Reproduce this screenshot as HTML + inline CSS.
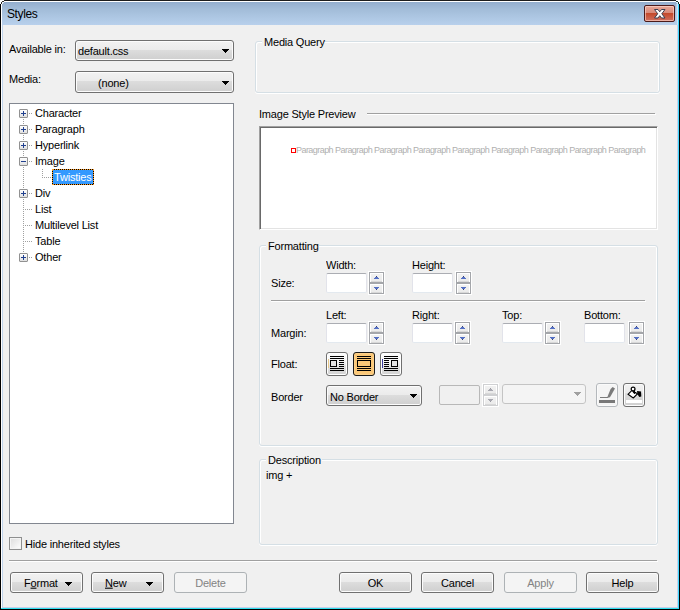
<!DOCTYPE html><html><head><meta charset="utf-8"><style>
*{box-sizing:border-box;margin:0;padding:0}
html,body{width:680px;height:610px;overflow:hidden;background:#f0f0f0}
body{position:relative;font-family:"Liberation Sans",sans-serif;font-size:11px;color:#000}
.a{position:absolute}
.t{position:absolute;white-space:nowrap;font-size:11px;letter-spacing:-0.2px;line-height:13px;transform:scaleY(1.06);transform-origin:0 0}
.btn{position:absolute;border:1px solid #707070;border-radius:3px;background:linear-gradient(#f2f2f2 0,#ebebeb 9px,#dddddd 9px,#cfcfcf 100%);box-shadow:inset 0 0 0 1px #fcfcfc}
.btn.dis{border-color:#adb2b5;background:#f4f4f4;box-shadow:none}
.grp{position:absolute;border:1px solid #d5dfe5;border-radius:3px;box-shadow:inset 1px 1px 0 #fff,inset -1px 0 0 #fff,0 1px 0 #fff}
.lbl{background:#f0f0f0;padding:0 2px}
.inp{position:absolute;background:#fff;border:1px solid #e2e3ea;border-top-color:#abadb3;border-bottom-color:#e3e9ef;border-radius:2px}
.inp.dis{background:#f0f0f0;border-color:#b8b8b8}
.arr{position:absolute;width:0;height:0;border-left:4px solid transparent;border-right:4px solid transparent;border-top:4px solid #000}
.sp{position:absolute;width:15px;height:11px;border:1px solid #a4a6aa;background:linear-gradient(#f2f2f2,#eaeaea);box-shadow:inset 1px 1px 0 #fff,inset -1px 0 0 #fff,inset 0 -1px 0 #d8d8d8}
.tb{position:absolute;width:9px;height:9px;border:1px solid #919191;border-radius:1px;background:linear-gradient(#fff,#e0e0e0)}
.fl{position:absolute;width:22px;height:24px;border:1px solid #707070;border-radius:3px;background:linear-gradient(#fdfdfd 0%,#f2f2f2 45%,#e2e2e2 60%,#d2d2d2 100%);box-shadow:inset 0 0 0 1px #fff}
</style></head><body>
<div class="a" style="left:0px;top:0px;width:680px;height:4px;background:#fff"></div>
<div class="a" style="left:2px;top:2px;width:676px;height:23px;background:linear-gradient(#90accc 0px,#96b0cf 1px,#a2bcd8 7px,#aac4e0 13px,#b8d0ec 23px)"></div>
<div class="a" style="left:4px;top:0px;width:672px;height:1px;background:#1c1c1c"></div>
<div class="a" style="left:4px;top:1px;width:672px;height:1px;background:#fff"></div>
<div class="a" style="left:2px;top:1px;width:2px;height:1px;background:#303030"></div>
<div class="a" style="left:676px;top:1px;width:2px;height:1px;background:#1a3030"></div>
<div class="a" style="left:1px;top:2px;width:1px;height:2px;background:#303030"></div>
<div class="a" style="left:678px;top:2px;width:1px;height:2px;background:#1a3030"></div>
<div class="a" style="left:2px;top:2px;width:2px;height:1px;background:#e8eef6"></div>
<div class="a" style="left:2px;top:3px;width:1px;height:1px;background:#f0f4fa"></div>
<div class="a" style="left:676px;top:2px;width:2px;height:1px;background:#d8f0fa"></div>
<div class="a" style="left:677px;top:3px;width:1px;height:1px;background:#c8ecfa"></div>
<div class="a" style="left:0px;top:4px;width:1px;height:606px;background:#000"></div>
<div class="a" style="left:1px;top:4px;width:1px;height:605px;background:#fff"></div>
<div class="a" style="left:2px;top:25px;width:1px;height:582px;background:#c0d4ec"></div>
<div class="a" style="left:676px;top:4px;width:1px;height:21px;background:#b4d0ec"></div>
<div class="a" style="left:677px;top:4px;width:1px;height:21px;background:#cce6f8"></div>
<div class="a" style="left:677px;top:25px;width:1px;height:583px;background:#c8d4ec"></div>
<div class="a" style="left:678px;top:4px;width:1px;height:605px;background:#40d8ff"></div>
<div class="a" style="left:679px;top:4px;width:1px;height:606px;background:#000"></div>
<div class="a" style="left:2px;top:607px;width:676px;height:1px;background:#c8d0e8"></div>
<div class="a" style="left:1px;top:608px;width:678px;height:1px;background:#30e0f0"></div>
<div class="a" style="left:0px;top:609px;width:680px;height:1px;background:#000"></div>
<div class="t" style="left:7px;top:8px;font-size:12px;letter-spacing:-0.4px;transform:none">Styles</div>
<div class="a" style="left:644px;top:5px;width:31px;height:17px;border:1px solid #4a1a1a;border-radius:2px;background:linear-gradient(#e8a898 0%,#d88a7a 45%,#c44a2c 50%,#d07060 100%);box-shadow:inset 0 0 0 1px rgba(255,220,210,.6)"></div>
<svg class="a" style="left:654px;top:9px" width="12" height="10"><path d="M0.5 0.5 L4 0.5 L5.75 2.8 L7.5 0.5 L11 0.5 L7.8 4.75 L11 9 L7.5 9 L5.75 6.7 L4 9 L0.5 9 L3.7 4.75 Z" fill="#fff" stroke="#3a3f50" stroke-width="1" stroke-linejoin="round"/></svg>
<div class="t" style="left:9px;top:42px;">Available in:</div>
<div class="btn" style="left:75px;top:40px;width:159px;height:21px"></div>
<div class="t" style="left:78px;top:44px;">default.css</div>
<svg class="a" style="left:222px;top:49px" width="7" height="4" shape-rendering="crispEdges" fill="#000"><rect x="0" y="0" width="7" height="1"/><rect x="1" y="1" width="5" height="1"/><rect x="2" y="2" width="3" height="1"/><rect x="3" y="3" width="1" height="1"/></svg>
<div class="t" style="left:9px;top:72px;">Media:</div>
<div class="btn" style="left:75px;top:71px;width:159px;height:22px"></div>
<div class="t" style="left:98px;top:76px;">(none)</div>
<svg class="a" style="left:222px;top:81px" width="7" height="4" shape-rendering="crispEdges" fill="#000"><rect x="0" y="0" width="7" height="1"/><rect x="1" y="1" width="5" height="1"/><rect x="2" y="2" width="3" height="1"/><rect x="3" y="3" width="1" height="1"/></svg>
<div class="a" style="left:9px;top:103px;width:225px;height:421px;background:#fff;border:1px solid #828790"></div>
<svg class="a" style="left:0;top:0" width="240" height="270" shape-rendering="crispEdges">
 <g stroke="#a0a0a0" stroke-width="1" stroke-dasharray="1 1">
  <path d="M23.5 119 V253"/>
  <path d="M29 113.5 H33 M29 129.5 H33 M29 145.5 H33 M29 161.5 H33 M29 193.5 H33 M29 257.5 H33"/>
  <path d="M25 209.5 H33 M25 225.5 H33 M25 241.5 H33"/>
  <path d="M42.5 169 V176 M42 177.5 H51"/>
 </g></svg>
<div class="tb" style="left:19px;top:109px"></div>
<div class="tb" style="left:19px;top:125px"></div>
<div class="tb" style="left:19px;top:141px"></div>
<div class="tb" style="left:19px;top:157px"></div>
<div class="tb" style="left:19px;top:189px"></div>
<div class="tb" style="left:19px;top:253px"></div>
<svg class="a" style="left:0;top:0" width="40" height="270" shape-rendering="crispEdges"><g stroke="#21408f" stroke-width="1">
  <path d="M21 113.5 H26 M23.5 111 V116"/><path d="M21 129.5 H26 M23.5 127 V132"/><path d="M21 145.5 H26 M23.5 143 V148"/>
  <path d="M21 161.5 H26"/><path d="M21 193.5 H26 M23.5 191 V196"/><path d="M21 257.5 H26 M23.5 255 V260"/></g></svg>
<div class="t" style="left:35px;top:106px;">Character</div>
<div class="t" style="left:35px;top:122px;">Paragraph</div>
<div class="t" style="left:35px;top:138px;">Hyperlink</div>
<div class="t" style="left:35px;top:154px;">Image</div>
<div class="t" style="left:35px;top:186px;">Div</div>
<div class="t" style="left:35px;top:202px;">List</div>
<div class="t" style="left:35px;top:218px;">Multilevel List</div>
<div class="t" style="left:35px;top:234px;">Table</div>
<div class="t" style="left:35px;top:250px;">Other</div>
<div class="a" style="left:52px;top:169px;width:42px;height:16px;background:#000"><div class="a" style="left:0;top:0;width:42px;height:16px;border:1px dotted #ff9a20;background:#3399ff;background-clip:padding-box"></div></div>
<div class="t" style="left:54px;top:170px;color:#fff">Twisties</div>
<div class="a" style="left:9px;top:537px;width:13px;height:13px;border:1px solid #8e8f8f;background:linear-gradient(135deg,#dcdcdc,#fff);box-shadow:inset 0 0 0 1px #f4f4f4"></div>
<div class="t" style="left:25px;top:537px;">Hide inherited styles</div>
<div class="a" style="left:9px;top:561px;width:649px;height:1px;background:#fff"></div>
<div class="a" style="left:9px;top:560px;width:648px;height:1px;background:#a0a0a0"></div>
<div class="btn" style="left:10px;top:572px;width:73px;height:21px"></div>
<div class="t" style="left:24px;top:576px;">F<u>o</u>rmat</div>
<svg class="a" style="left:65px;top:582px" width="7" height="4" shape-rendering="crispEdges" fill="#000"><rect x="0" y="0" width="7" height="1"/><rect x="1" y="1" width="5" height="1"/><rect x="2" y="2" width="3" height="1"/><rect x="3" y="3" width="1" height="1"/></svg>
<div class="btn" style="left:91px;top:572px;width:73px;height:21px"></div>
<div class="t" style="left:105px;top:576px;"><u>N</u>ew</div>
<svg class="a" style="left:146px;top:582px" width="7" height="4" shape-rendering="crispEdges" fill="#000"><rect x="0" y="0" width="7" height="1"/><rect x="1" y="1" width="5" height="1"/><rect x="2" y="2" width="3" height="1"/><rect x="3" y="3" width="1" height="1"/></svg>
<div class="btn dis" style="left:174px;top:572px;width:73px;height:21px"></div>
<div class="t" style="left:174px;top:576px;width:73px;text-align:center;color:#838383;">Delete</div>
<div class="btn" style="left:339px;top:572px;width:73px;height:21px"></div>
<div class="t" style="left:339px;top:576px;width:73px;text-align:center;">OK</div>
<div class="btn" style="left:421px;top:572px;width:73px;height:21px"></div>
<div class="t" style="left:421px;top:576px;width:73px;text-align:center;">Cancel</div>
<div class="btn dis" style="left:504px;top:572px;width:73px;height:21px"></div>
<div class="t" style="left:504px;top:576px;width:73px;text-align:center;color:#838383;">Apply</div>
<div class="btn" style="left:586px;top:572px;width:73px;height:21px"></div>
<div class="t" style="left:586px;top:576px;width:73px;text-align:center;">Help</div>
<div class="grp" style="left:255px;top:41px;width:405px;height:52px"></div>
<div class="a" style="left:262px;top:40px;width:62px;height:4px;background:#f0f0f0"></div>
<div class="t" style="left:264px;top:35px;">Media Query</div>
<div class="t" style="left:259px;top:107px;">Image Style Preview</div>
<div class="a" style="left:367px;top:114px;width:289px;height:1px;background:#fff"></div>
<div class="a" style="left:367px;top:113px;width:288px;height:1px;background:#a0a0a0"></div>
<div class="a" style="left:259px;top:126px;width:399px;height:104px;background:#fff;border-style:solid;border-width:1px;border-color:#a0a0a0 #fff #fff #a0a0a0;box-shadow:inset 1px 1px 0 #696969,inset -1px -1px 0 #e3e3e3"></div>
<div class="a" style="left:291px;top:148px;width:5px;height:5px;border:1px solid #f00;background:#fff"></div>
<div class="t" style="left:296px;top:144px;font-size:9px;letter-spacing:-0.55px;color:#b0b0b0;transform:none">Paragraph Paragraph Paragraph Paragraph Paragraph Paragraph Paragraph Paragraph Paragraph</div>
<div class="grp" style="left:259px;top:245px;width:399px;height:201px"></div>
<div class="a" style="left:266px;top:244px;width:53px;height:4px;background:#f0f0f0"></div>
<div class="t" style="left:268px;top:239px;">Formatting</div>
<div class="t" style="left:326px;top:258px;">Width:</div>
<div class="t" style="left:412px;top:258px;">Height:</div>
<div class="t" style="left:271px;top:276px;">Size:</div>
<div class="inp" style="left:326px;top:273px;width:41px;height:20px"></div>
<div class="a" style="left:368px;top:271px;width:17px;height:24px;background:#fff"></div>
<div class="sp" style="left:369px;top:272px;"></div>
<div class="sp" style="left:369px;top:283px;"></div>
<svg class="a" style="left:374px;top:276px" width="5" height="3" shape-rendering="crispEdges"><rect x="2" y="0" width="1" height="1" fill="#3a3f70"/><rect x="1" y="1" width="3" height="1" fill="#5470c4"/><rect x="0" y="2" width="5" height="1" fill="#5470c4"/></svg>
<svg class="a" style="left:374px;top:287px" width="5" height="3" shape-rendering="crispEdges"><rect x="0" y="0" width="5" height="1" fill="#5470c4"/><rect x="1" y="1" width="3" height="1" fill="#5470c4"/><rect x="2" y="2" width="1" height="1" fill="#3a3f70"/></svg>
<div class="inp" style="left:412px;top:273px;width:41px;height:20px"></div>
<div class="a" style="left:455px;top:271px;width:17px;height:24px;background:#fff"></div>
<div class="sp" style="left:456px;top:272px;"></div>
<div class="sp" style="left:456px;top:283px;"></div>
<svg class="a" style="left:461px;top:276px" width="5" height="3" shape-rendering="crispEdges"><rect x="2" y="0" width="1" height="1" fill="#3a3f70"/><rect x="1" y="1" width="3" height="1" fill="#5470c4"/><rect x="0" y="2" width="5" height="1" fill="#5470c4"/></svg>
<svg class="a" style="left:461px;top:287px" width="5" height="3" shape-rendering="crispEdges"><rect x="0" y="0" width="5" height="1" fill="#5470c4"/><rect x="1" y="1" width="3" height="1" fill="#5470c4"/><rect x="2" y="2" width="1" height="1" fill="#3a3f70"/></svg>
<div class="a" style="left:271px;top:301px;width:375px;height:1px;background:#fff"></div>
<div class="a" style="left:271px;top:300px;width:374px;height:1px;background:#a0a0a0"></div>
<div class="t" style="left:326px;top:308px;">Left:</div>
<div class="t" style="left:412px;top:308px;">Right:</div>
<div class="t" style="left:502px;top:308px;">Top:</div>
<div class="t" style="left:584px;top:308px;">Bottom:</div>
<div class="t" style="left:271px;top:326px;">Margin:</div>
<div class="inp" style="left:326px;top:323px;width:41px;height:20px"></div>
<div class="a" style="left:368px;top:321px;width:17px;height:24px;background:#fff"></div>
<div class="sp" style="left:369px;top:322px;"></div>
<div class="sp" style="left:369px;top:333px;"></div>
<svg class="a" style="left:374px;top:326px" width="5" height="3" shape-rendering="crispEdges"><rect x="2" y="0" width="1" height="1" fill="#3a3f70"/><rect x="1" y="1" width="3" height="1" fill="#5470c4"/><rect x="0" y="2" width="5" height="1" fill="#5470c4"/></svg>
<svg class="a" style="left:374px;top:337px" width="5" height="3" shape-rendering="crispEdges"><rect x="0" y="0" width="5" height="1" fill="#5470c4"/><rect x="1" y="1" width="3" height="1" fill="#5470c4"/><rect x="2" y="2" width="1" height="1" fill="#3a3f70"/></svg>
<div class="inp" style="left:412px;top:323px;width:41px;height:20px"></div>
<div class="a" style="left:454px;top:321px;width:17px;height:24px;background:#fff"></div>
<div class="sp" style="left:455px;top:322px;"></div>
<div class="sp" style="left:455px;top:333px;"></div>
<svg class="a" style="left:460px;top:326px" width="5" height="3" shape-rendering="crispEdges"><rect x="2" y="0" width="1" height="1" fill="#3a3f70"/><rect x="1" y="1" width="3" height="1" fill="#5470c4"/><rect x="0" y="2" width="5" height="1" fill="#5470c4"/></svg>
<svg class="a" style="left:460px;top:337px" width="5" height="3" shape-rendering="crispEdges"><rect x="0" y="0" width="5" height="1" fill="#5470c4"/><rect x="1" y="1" width="3" height="1" fill="#5470c4"/><rect x="2" y="2" width="1" height="1" fill="#3a3f70"/></svg>
<div class="inp" style="left:502px;top:323px;width:41px;height:20px"></div>
<div class="a" style="left:544px;top:321px;width:17px;height:24px;background:#fff"></div>
<div class="sp" style="left:545px;top:322px;"></div>
<div class="sp" style="left:545px;top:333px;"></div>
<svg class="a" style="left:550px;top:326px" width="5" height="3" shape-rendering="crispEdges"><rect x="2" y="0" width="1" height="1" fill="#3a3f70"/><rect x="1" y="1" width="3" height="1" fill="#5470c4"/><rect x="0" y="2" width="5" height="1" fill="#5470c4"/></svg>
<svg class="a" style="left:550px;top:337px" width="5" height="3" shape-rendering="crispEdges"><rect x="0" y="0" width="5" height="1" fill="#5470c4"/><rect x="1" y="1" width="3" height="1" fill="#5470c4"/><rect x="2" y="2" width="1" height="1" fill="#3a3f70"/></svg>
<div class="inp" style="left:584px;top:323px;width:41px;height:20px"></div>
<div class="a" style="left:628px;top:321px;width:17px;height:24px;background:#fff"></div>
<div class="sp" style="left:629px;top:322px;"></div>
<div class="sp" style="left:629px;top:333px;"></div>
<svg class="a" style="left:634px;top:326px" width="5" height="3" shape-rendering="crispEdges"><rect x="2" y="0" width="1" height="1" fill="#3a3f70"/><rect x="1" y="1" width="3" height="1" fill="#5470c4"/><rect x="0" y="2" width="5" height="1" fill="#5470c4"/></svg>
<svg class="a" style="left:634px;top:337px" width="5" height="3" shape-rendering="crispEdges"><rect x="0" y="0" width="5" height="1" fill="#5470c4"/><rect x="1" y="1" width="3" height="1" fill="#5470c4"/><rect x="2" y="2" width="1" height="1" fill="#3a3f70"/></svg>
<div class="t" style="left:271px;top:357px;">Float:</div>
<div class="fl" style="left:326px;top:352px"></div>
<div class="fl" style="left:353px;top:352px;border-color:#1a1a1a;background:#fbc878;box-shadow:inset 0 0 0 1px #fcd08a"></div>
<div class="fl" style="left:380px;top:352px"></div>
<svg class="a" style="left:328px;top:356px" width="18" height="15" shape-rendering="crispEdges" fill="#000"><rect x="2" y="0" width="14" height="1"/><rect x="2" y="2" width="14" height="1"/><rect x="2" y="12" width="14" height="1"/><rect x="2" y="14" width="14" height="1"/><rect x="2" y="4" width="7" height="7" fill="#000"/><rect x="3" y="5" width="5" height="5" fill="#e4e4e4"/><rect x="11" y="4" width="5" height="1"/><rect x="11" y="6" width="5" height="1"/><rect x="11" y="8" width="5" height="1"/><rect x="11" y="10" width="5" height="1"/><rect x="0" y="3" width="1" height="9" fill="#e8c888"/></svg>
<svg class="a" style="left:357px;top:356px" width="14" height="15" shape-rendering="crispEdges" fill="#000"><rect x="0" y="0" width="14" height="1"/><rect x="0" y="2" width="14" height="1"/><rect x="0" y="12" width="14" height="1"/><rect x="0" y="14" width="14" height="1"/><rect x="0" y="4" width="14" height="7"/><rect x="1" y="5" width="12" height="5" fill="#fbc878"/></svg>
<svg class="a" style="left:384px;top:356px" width="18" height="15" shape-rendering="crispEdges" fill="#000"><rect x="0" y="0" width="14" height="1"/><rect x="0" y="2" width="14" height="1"/><rect x="0" y="12" width="14" height="1"/><rect x="0" y="14" width="14" height="1"/><rect x="7" y="4" width="7" height="7"/><rect x="8" y="5" width="5" height="5" fill="#e4e4e4"/><rect x="0" y="4" width="5" height="1"/><rect x="0" y="6" width="5" height="1"/><rect x="0" y="8" width="5" height="1"/><rect x="0" y="10" width="5" height="1"/></svg>
<div class="a" style="left:382px;top:359px;width:1px;height:9px;background:#3a3a9a"></div>
<div class="t" style="left:271px;top:390px;">Border</div>
<div class="btn" style="left:326px;top:385px;width:96px;height:21px"></div>
<div class="t" style="left:330px;top:390px;">No Border</div>
<svg class="a" style="left:410px;top:394px" width="7" height="4" shape-rendering="crispEdges" fill="#000"><rect x="0" y="0" width="7" height="1"/><rect x="1" y="1" width="5" height="1"/><rect x="2" y="2" width="3" height="1"/><rect x="3" y="3" width="1" height="1"/></svg>
<div class="inp dis" style="left:439px;top:385px;width:41px;height:20px"></div>
<div class="a" style="left:482px;top:383px;width:17px;height:24px;background:#fff"></div>
<div class="sp" style="left:483px;top:384px;border-color:#cfd0d2;"></div>
<div class="sp" style="left:483px;top:395px;border-color:#cfd0d2;"></div>
<svg class="a" style="left:488px;top:388px" width="5" height="3" shape-rendering="crispEdges"><rect x="2" y="0" width="1" height="1" fill="#9a9aa2"/><rect x="1" y="1" width="3" height="1" fill="#a8a8b0"/><rect x="0" y="2" width="5" height="1" fill="#a8a8b0"/></svg>
<svg class="a" style="left:488px;top:399px" width="5" height="3" shape-rendering="crispEdges"><rect x="0" y="0" width="5" height="1" fill="#a8a8b0"/><rect x="1" y="1" width="3" height="1" fill="#a8a8b0"/><rect x="2" y="2" width="1" height="1" fill="#9a9aa2"/></svg>
<div class="a" style="left:502px;top:384px;width:84px;height:20px;border:1px solid #c4c4c4;border-radius:3px;background:#f4f4f4"></div>
<svg class="a" style="left:574px;top:392px" width="7" height="4" shape-rendering="crispEdges" fill="#a0a0a0"><rect x="0" y="0" width="7" height="1"/><rect x="1" y="1" width="5" height="1"/><rect x="2" y="2" width="3" height="1"/><rect x="3" y="3" width="1" height="1"/></svg>
<div class="fl" style="left:596px;top:383px;width:22px;height:24px;border-color:#b4b8bc;background:#f4f4f4;box-shadow:inset 0 0 0 1px #fafafa"></div>
<svg class="a" style="left:596px;top:383px" width="22" height="24"><path d="M11 14.9 L14.6 6 L16.6 4 L19 5.4 L14 14.3 Z" fill="#7a7a7a"/><path d="M4 14.5 H12" stroke="#7a7a7a" stroke-width="1"/><rect x="3" y="17" width="16" height="3" fill="#787878"/></svg>
<div class="btn" style="left:623px;top:383px;width:22px;height:24px"></div>
<svg class="a" style="left:623px;top:383px" width="22" height="24"><rect x="3" y="17" width="16" height="3" fill="#fff"/><path d="M5 11.3 L8.7 7.6 L14.4 10.8 L10.3 15 Z" fill="#fff" stroke="#000" stroke-width="1.1" stroke-linejoin="round"/><circle cx="10.1" cy="6" r="1.9" fill="#fff" stroke="#000" stroke-width="1.2"/><path d="M11.5 6.5 V10.5 M10 9 L11.5 10.8 L13 9" fill="none" stroke="#000" stroke-width="1"/><path d="M14 7.9 L18.1 8.6 L18.3 13.6 L16.3 13.9 L14.4 11.3 Z" fill="#000"/></svg>
<div class="grp" style="left:259px;top:459px;width:399px;height:86px"></div>
<div class="a" style="left:266px;top:458px;width:56px;height:4px;background:#f0f0f0"></div>
<div class="t" style="left:268px;top:453px;">Description</div>
<div class="t" style="left:266px;top:468px;">img +</div>
</body></html>
